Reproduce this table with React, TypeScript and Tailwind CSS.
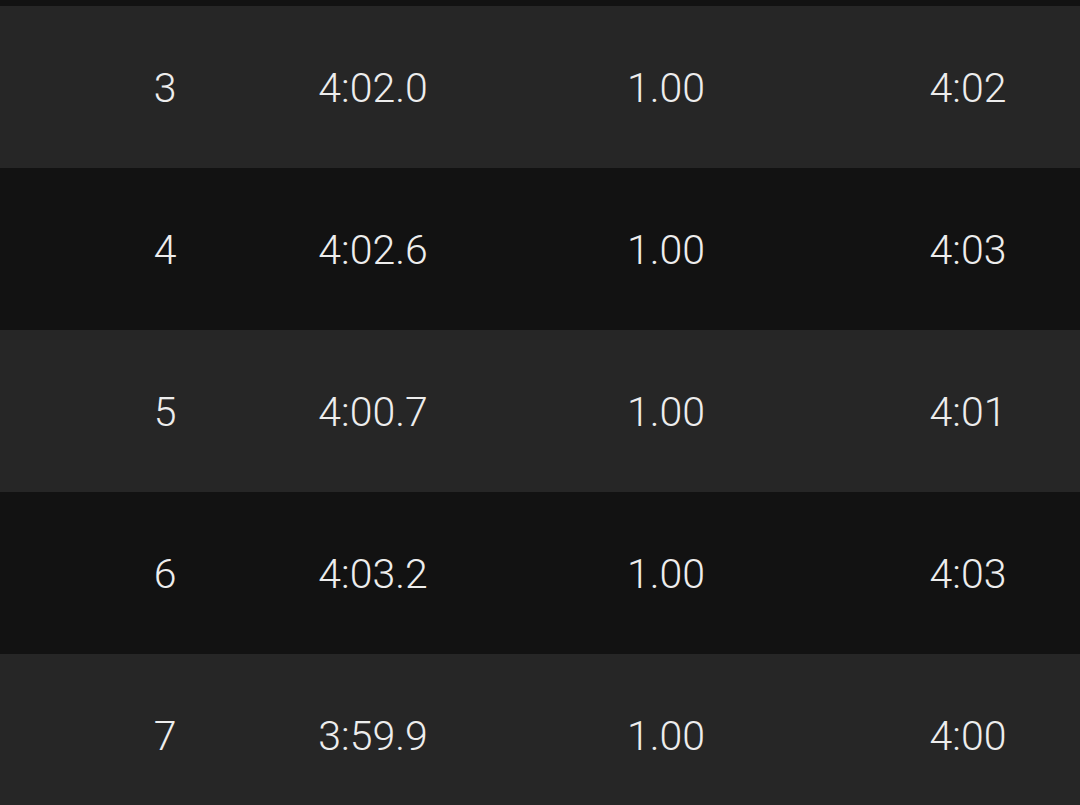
const rows = [
  { lap: '3', time: '4:02.0', dist: '1.00', pace: '4:02' },
  { lap: '4', time: '4:02.6', dist: '1.00', pace: '4:03' },
  { lap: '5', time: '4:00.7', dist: '1.00', pace: '4:01' },
  { lap: '6', time: '4:03.2', dist: '1.00', pace: '4:03' },
  { lap: '7', time: '3:59.9', dist: '1.00', pace: '4:00' },
]

const Row = ({ lap, time, dist, pace, odd }: { lap: string; time: string; dist: string; pace: string; odd: boolean }) => {
  return (
    <div
      className={`grid h-[162px] shrink-0 grid-cols-[210px_206px_380px_224px] items-center pl-[60px] pt-[4px] ${
        odd ? 'bg-[#121212]' : 'bg-[#262626]'
      }`}
    >
      <div className="flex justify-center">{lap}</div>
      <div className="flex justify-center">{time}</div>
      <div className="flex justify-center">{dist}</div>
      <div className="flex justify-center">{pace}</div>
    </div>
  )
}

export default function App() {
  return (
    <div
      className="flex h-[805px] w-[1080px] flex-col overflow-hidden bg-[#121212] pt-[6px] text-[41px] font-light text-[#ededed]"
      style={{ fontFamily: 'Roboto, "Noto Sans", sans-serif' }}
    >
      {rows.map((r, i) => (
        <Row key={r.lap} {...r} odd={i % 2 === 1} />
      ))}
    </div>
  )
}
